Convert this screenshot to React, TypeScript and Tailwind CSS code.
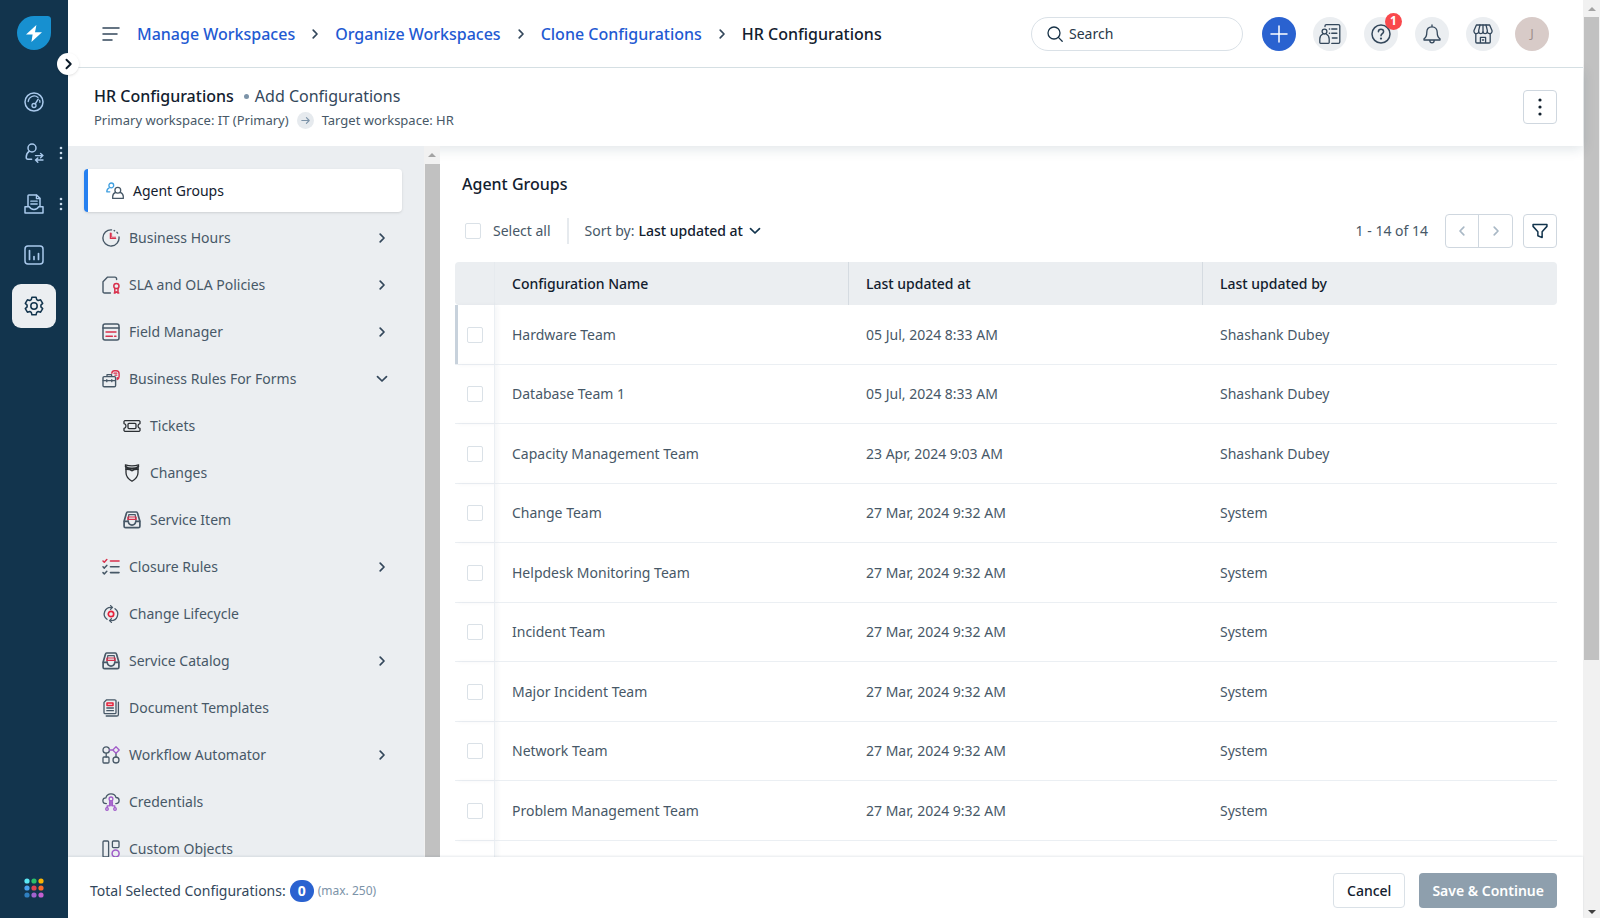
import type { ReactNode } from "react";
import clsx from "clsx";

type IconProps = { className?: string; viewBox?: string; children?: ReactNode };

function Svg({ className = "size-[18px]", viewBox = "0 0 18 18", children }: IconProps) {
  return (
    <svg
      className={clsx("shrink-0", className)}
      viewBox={viewBox}
      fill="none"
      stroke="currentColor"
      strokeWidth="1.3"
      strokeLinecap="round"
      strokeLinejoin="round"
      aria-hidden="true"
    >
      {children}
    </svg>
  );
}

const RED = "#d9304c";
const PURPLE = "#a15bc9";

function ChevronRight({ className = "h-[10px] w-[8px]" }: IconProps) {
  return (
    <Svg className={className} viewBox="0 0 8 10">
      <path d="M2.2 1.2 6 5 2.2 8.8" strokeWidth="1.7" />
    </Svg>
  );
}

function ChevronDown({ className = "h-[8px] w-[12px]" }: IconProps) {
  return (
    <Svg className={className} viewBox="0 0 12 8">
      <path d="M1.5 1.6 6 6l4.5-4.4" strokeWidth="1.7" />
    </Svg>
  );
}

function TrayIcon() {
  return (
    <Svg>
      <path d="M4.6 1h8.8q.9 0 1.100.9l2.400 8.300v5q0 1.500-1.500 1.500H2.600q-1.500 0-1.500-1.500v-5L3.500 1.900Q3.700 1 4.600 1z" strokeWidth="1.7" />
      <path d="M6.200 3.700h5.600M5.800 3.700 5 10M12.200 3.700 13 10" strokeWidth="1.2" />
      <path d="M4.900 6h8.200v2.400H4.900z" stroke={RED} strokeWidth="1.2" />
      <path d="M1.400 10.400h3.800q.6 3.700 3.800 3.700t3.800-3.700h3.800" strokeWidth="1.6" />
    </Svg>
  );
}

const icons: Record<string, ReactNode> = {
  groups: (
    <Svg>
      <g stroke="#3f9fe0">
        <circle cx="5.3" cy="3.4" r="2.4" />
        <path d="M3.2 5.8C1.4 6.6.8 8 .8 9.8h3" />
      </g>
      <circle cx="11.8" cy="8.3" r="2.9" />
      <path d="M9.6 10.4c-2 .8-2.900 2.300-2.900 4.200v1.800h10.600v-1.800c0-1.900-1-3.400-3-4.200" />
    </Svg>
  ),
  clock: (
    <Svg>
      <path d="M9.500.9A8.100 8.100 0 1 0 17 8M12.200 1.600l.4.2M15 3.300l.6.8" strokeWidth="1.4" />
      <path d="M8.400 4.200v5.200h5.200" stroke={RED} />
      <path d="M9.600 4.200v4h4" stroke={RED} strokeWidth=".8" />
    </Svg>
  ),
  sla: (
    <Svg>
      <path d="M8.400 17H2.600Q1 17 1 15.400V5.800L5.600 1.100h7.200q1.800 0 1.800 1.800v.6" strokeWidth="1.4" />
      <g stroke={RED} strokeWidth="1.5">
        <circle cx="14.400" cy="10" r="2.600" />
        <path d="M12.800 12.400v4.600l1.600-1.200L16 17v-4.600M12.200 17h1M15.800 17h1" />
      </g>
    </Svg>
  ),
  field: (
    <Svg>
      <rect x="1" y="1" width="16" height="16" rx="2" strokeWidth="1.5" />
      <path d="M1 5h16" strokeWidth="1.6" />
      <path d="M4 9h10M4 13.200h6.400M12.600 13.200h1.400" stroke={RED} strokeWidth="1.4" />
    </Svg>
  ),
  rules: (
    <Svg>
      <rect x="1" y="6.600" width="12.600" height="10.200" rx="1.200" strokeWidth="1.4" />
      <path d="M5 6.400V4.700h4.600v1.700M1.200 10.600h12.200M4.800 9.700v2M9.800 9.700v2" />
      <g stroke={RED}>
        <path d="M9.800 3.200c.2-1.600 1.200-2.400 2.600-2.400h1.800c1.700 0 2.900 1.200 2.900 2.900v2.800c0 1.400-.8 2.400-1.800 2.900V7.600" strokeWidth="1.4" />
        <path d="M12 3.200h2.800M13 5.200h1.800" />
      </g>
    </Svg>
  ),
  tickets: (
    <Svg>
      <path d="M1.800 3.600h14.400l.8.8v2.200q-2 .4-2 2.400t2 2.400v2.200l-.8.800H1.800l-.8-.8v-2.200q2-.4 2-2.400t-2-2.400V4.400z" strokeWidth="1.3" />
      <rect x="5" y="6.400" width="8" height="5.200" rx="1" />
    </Svg>
  ),
  changes: (
    <Svg>
      <path d="M2.400.8q6.600 2.200 13.200 0l-.6 3.400v4.600q0 5-6 8.400-6-3.400-6-8.400V4.200z" />
      <path d="M2.600 2.600q2.400 1.700 6.400 1.700t6.400-1.700M3 5.200q3.800-.2 6 1.500 2.200-1.700 6-1.500" strokeWidth="1.7" />
    </Svg>
  ),
  service: <TrayIcon />,
  closure: (
    <Svg>
      <g stroke={RED}>
        <path d="m1 3 1.300 1.300L4.800 1.600" strokeWidth="1.5" />
        <path d="M8.500 3H17" strokeWidth="1.6" />
      </g>
      <path d="m1 8.800 1.300 1.300 2.500-2.700M1 14.600l1.300 1.300 2.500-2.700" strokeWidth="1.5" />
      <path d="M8.500 8.800H17M8.500 14.600H17" strokeWidth="1.6" />
    </Svg>
  ),
  lifecycle: (
    <Svg>
      <circle cx="9" cy="9" r="2.700" stroke="#e5213a" strokeWidth="1.700" />
      <path d="M9.600 2.400A6.600 6.600 0 0 0 5 14.300M8.400 15.600A6.600 6.600 0 0 0 13 3.700" />
      <path d="m8.600.6 1.900 1.800-1.900 1.800M9.400 13.800l-1.900 1.800 1.900 1.800" />
    </Svg>
  ),
  catalog: <TrayIcon />,
  documents: (
    <Svg>
      <path d="M3.200 14.600h9.600q1.200 0 1.200-1.200V2q0-1.200-1.200-1.200H4.600L2 3.400v10q0 1.200 1.200 1.200z" />
      <path d="M16.400 3.200v12.200q0 1.600-1.600 1.600H4.200" />
      <rect x="5" y="4" width="6" height="2.400" stroke="#e5213a" strokeWidth="1.5" />
      <path d="M4.800 9h6.600M4.800 11.700h6.600" />
    </Svg>
  ),
  workflow: (
    <Svg>
      <circle cx="4.200" cy="4" r="3.200" />
      <rect x="1" y="11" width="6" height="6" rx="1" />
      <circle cx="14" cy="14" r="3" />
      <path d="M4.200 7.200V11M14 7.400V11" />
      <path d="M14 .8 17.200 4 14 7.200 10.800 4zM7.400 4h3.400" stroke={PURPLE} />
    </Svg>
  ),
  credentials: (
    <Svg>
      <path d="M4.400 10.600C2.200 10.600.9 9.400.9 7.700c0-1.800 1.400-2.800 3-2.800C4.400 2.500 6.500.8 9 .8c2.400 0 4.400 1.500 5 3.700 1.800 0 3.100 1.200 3.100 3 0 1.900-1.300 3.100-3.300 3.100" />
      <g stroke={PURPLE}>
        <circle cx="9" cy="5.900" r="1.900" />
        <path d="M9 7.800v5M7.600 8.600v4.200H5.200v1.800M10.400 8.600v4.200h2.400v1.800" />
        <circle cx="5" cy="16" r="1.300" />
        <circle cx="13" cy="16" r="1.300" />
      </g>
    </Svg>
  ),
  objects: (
    <Svg>
      <rect x="1" y="1" width="5.600" height="16" rx="1" />
      <rect x="10.400" y="1" width="6.600" height="6.600" rx="1" />
      <circle cx="13.600" cy="13.600" r="3.500" stroke={PURPLE} strokeWidth="1.5" />
    </Svg>
  ),
};

type NavItem = { label: string; icon: string; child?: boolean; active?: boolean; chevron?: "right" | "down" };

const navItems: NavItem[] = [
  { label: "Agent Groups", icon: "groups", active: true },
  { label: "Business Hours", icon: "clock", chevron: "right" },
  { label: "SLA and OLA Policies", icon: "sla", chevron: "right" },
  { label: "Field Manager", icon: "field", chevron: "right" },
  { label: "Business Rules For Forms", icon: "rules", chevron: "down" },
  { label: "Tickets", icon: "tickets", child: true },
  { label: "Changes", icon: "changes", child: true },
  { label: "Service Item", icon: "service", child: true },
  { label: "Closure Rules", icon: "closure", chevron: "right" },
  { label: "Change Lifecycle", icon: "lifecycle" },
  { label: "Service Catalog", icon: "catalog", chevron: "right" },
  { label: "Document Templates", icon: "documents" },
  { label: "Workflow Automator", icon: "workflow", chevron: "right" },
  { label: "Credentials", icon: "credentials" },
  { label: "Custom Objects", icon: "objects" },
];

const rows = [
  ["Hardware Team", "05 Jul, 2024 8:33 AM", "Shashank Dubey"],
  ["Database Team 1", "05 Jul, 2024 8:33 AM", "Shashank Dubey"],
  ["Capacity Management Team", "23 Apr, 2024 9:03 AM", "Shashank Dubey"],
  ["Change Team", "27 Mar, 2024 9:32 AM", "System"],
  ["Helpdesk Monitoring Team", "27 Mar, 2024 9:32 AM", "System"],
  ["Incident Team", "27 Mar, 2024 9:32 AM", "System"],
  ["Major Incident Team", "27 Mar, 2024 9:32 AM", "System"],
  ["Network Team", "27 Mar, 2024 9:32 AM", "System"],
  ["Problem Management Team", "27 Mar, 2024 9:32 AM", "System"],
];

const dots = ["#5be8f5", "#2bbf6a", "#fbb404", "#4aa3f0", "#e04352", "#fb6a2a", "#2f7fc0", "#a263cf", "#c45fd0"];

function RailDots() {
  return (
    <svg className="absolute top-[15px] left-[59px] h-3.5 w-1" viewBox="0 0 4 14" fill="#c5d8ea" aria-hidden="true">
      <circle cx="2" cy="2" r="1.3" />
      <circle cx="2" cy="7" r="1.3" />
      <circle cx="2" cy="12" r="1.3" />
    </svg>
  );
}

function Rail() {
  return (
    <aside className="relative z-30 flex w-[68px] shrink-0 flex-col items-center bg-[#12344d] pt-4 pb-5 text-[#a9c9ec]">
      <a href="#" aria-label="Home">
        <svg className="size-[34px]" viewBox="0 0 34 34" aria-hidden="true">
          <path d="M17 0h13.500Q34 0 34 3.500V17A17 17 0 1 1 17 0z" fill="#1790d0" />
          <path d="M19.400 9 9 18.400h6.600L14.400 26 25 16.200h-7z" fill="#fff" />
        </svg>
      </a>
      <button
        aria-label="Expand menu"
        className="absolute top-[53px] left-[57px] flex size-[22px] items-center justify-center rounded-full bg-white text-[#0b1a28] shadow"
      >
        <ChevronRight className="h-[12px] w-[9px]" />
      </button>

      <nav className="mt-[30px] flex w-full flex-col items-center gap-[7px]">
        <a href="#" aria-label="Dashboard" className="flex h-11 w-full items-center justify-center">
          <Svg className="size-5" viewBox="0 0 20 20">
            <circle cx="10" cy="10" r="9" strokeWidth="1.5" />
            <path d="M4.200 9.500A6 6 0 0 1 14 5.400M15.600 8.300q.4 1 .3 2" />
            <circle cx="10" cy="13.500" r="2" />
            <path d="m11.200 11.800 3-4.600" strokeWidth="1.5" />
          </Svg>
        </a>
        <a href="#" aria-label="Tickets" className="relative flex h-11 w-full items-center justify-center">
          <Svg className="size-5" viewBox="0 0 20 20">
            <circle cx="8" cy="5" r="4" strokeWidth="1.5" />
            <path d="M5.400 8.200Q2.200 10.400 2.200 14.200q0 2 1.800 2h3.600" strokeWidth="1.5" />
            <path d="M11.500 12.600H19M16.600 10.400l2.300 2.200-2.300 2.200M19 17h-7.500M13.800 14.900 11.500 17l2.300 2.200" strokeWidth="1.4" />
          </Svg>
          <RailDots />
        </a>
        <a href="#" aria-label="Assets" className="relative flex h-11 w-full items-center justify-center">
          <Svg className="size-5" viewBox="0 0 20 20">
            <path d="M4 12V1.800Q4 1 4.800 1h7.800L16 4.400V12" strokeWidth="1.5" />
            <path d="M12.400 1.200v3.400h3.400M6.800 7.200h6.400M6.800 10h6.400" />
            <path d="M1 19v-6.200h4.400q1 2.600 4.600 2.600t4.600-2.600H19V19z" strokeWidth="1.5" />
          </Svg>
          <RailDots />
        </a>
        <a href="#" aria-label="Reports" className="flex h-11 w-full items-center justify-center">
          <Svg className="size-5" viewBox="0 0 20 20">
            <rect x="1" y="1" width="18" height="18" rx="3" strokeWidth="1.5" />
            <path d="M5.500 5.500v9M10 11.500v3M14.500 8.500v6" strokeWidth="1.7" />
          </Svg>
        </a>
        <a
          href="#"
          aria-label="Admin"
          className="flex size-11 items-center justify-center rounded-[9px] bg-[#ebeef1] text-[#12344d]"
        >
          <Svg className="size-5" viewBox="0 0 20 20">
            <path
              d="M7.900 1.200h4.200l.6 2.400 1.500.9 2.400-.7 2.100 3.600-1.800 1.700v1.800l1.800 1.700-2.100 3.600-2.400-.7-1.500.9-.6 2.400H7.900l-.6-2.400-1.500-.9-2.400.7-2.100-3.600 1.800-1.700V9.100L1.300 7.400l2.100-3.600 2.400.7 1.500-.9z"
              strokeWidth="1.5"
            />
            <circle cx="10" cy="10" r="3.200" strokeWidth="1.5" />
          </Svg>
        </a>
      </nav>

      <button aria-label="Switch product" className="mt-auto">
        <svg className="size-5" viewBox="0 0 20 20" aria-hidden="true">
          {dots.map((color, i) => (
            <circle key={color} cx={3 + (i % 3) * 7} cy={3 + Math.floor(i / 3) * 7} r="2.6" fill={color} />
          ))}
        </svg>
      </button>
    </aside>
  );
}

function RoundButton({ label, children }: { label: string; children: ReactNode }) {
  return (
    <button
      aria-label={label}
      className="relative flex size-[34px] items-center justify-center rounded-full bg-[#ebeef1] text-[#33475b]"
    >
      {children}
    </button>
  );
}

function TopBar() {
  const crumbs = ["Manage Workspaces", "Organize Workspaces", "Clone Configurations"];

  return (
    <header className="relative z-20 flex h-[68px] shrink-0 items-center border-b border-[#d5dfe3] bg-white px-[34px]">
      <button aria-label="Toggle menu" className="text-[#33475b]">
        <Svg className="h-4 w-[18px]" viewBox="0 0 18 16">
          <path d="M1 2h16M1 8h14M1 14h9" strokeWidth="1.5" />
        </Svg>
      </button>

      <nav className="ml-[17px] flex items-center gap-4 text-base font-medium text-[#1f5ad2]">
        {crumbs.map((crumb) => (
          <span key={crumb} className="flex items-center gap-4">
            <a href="#">{crumb}</a>
            <ChevronRight className="h-[12px] w-[8px] text-[#33475b]" />
          </span>
        ))}
        <span className="text-[#12202e]">HR Configurations</span>
      </nav>

      <div className="ml-auto flex items-center gap-[17px]">
        <label className="mr-0.5 flex h-[34px] w-[212px] items-center gap-1.5 rounded-full border border-[#dae1e7] px-[15px] text-[#183247]">
          <Svg className="size-4" viewBox="0 0 16 16">
            <circle cx="7" cy="7" r="6" />
            <path d="m11.400 11.400 3.800 3.800" />
          </Svg>
          <input
            type="search"
            aria-label="Search"
            placeholder="Search"
            className="w-full bg-transparent text-sm outline-none placeholder:text-[#283848]"
          />
        </label>
        <button aria-label="Create" className="flex size-[34px] items-center justify-center rounded-full bg-[#2a62d0] text-white">
          <Svg>
            <path d="M9 1v16M1 9h16" strokeWidth="1.5" />
          </Svg>
        </button>
        <RoundButton label="Directory">
          <Svg className="size-[22px]" viewBox="0 0 22 22">
            <circle cx="5.500" cy="8.600" r="2.400" />
            <path d="M3.800 11C1.800 12 .8 13.800.8 16v3.600q0 .8.800.800h7.800q.8 0 .8-.8V16c0-2.200-1-4-3-5" />
            <path d="M6 3.600V3q0-1.400 1.400-1.400h12q1.400 0 1.400 1.400v16q0 1.400-1.400 1.400h-6.600" />
            <path d="M10.400 6h.2M12.800 6h5M10.400 10.300h.2M12.800 10.300h5M13.400 15h4.600" strokeWidth="1.5" />
          </Svg>
        </RoundButton>
        <RoundButton label="Help">
          <Svg className="size-5" viewBox="0 0 20 20">
            <circle cx="10" cy="10" r="9" strokeWidth="1.5" />
            <path d="M7.400 7.800c0-1.500 1.100-2.500 2.600-2.500s2.600 1 2.600 2.400c0 1.800-2.600 2.100-2.600 4.100" strokeWidth="1.5" />
            <circle cx="10" cy="14.600" r=".5" fill="currentColor" />
          </Svg>
          <span className="absolute -top-1 -right-1 flex size-[17px] items-center justify-center rounded-full bg-[#f9484c] text-xs leading-none font-bold text-white">
            1
          </span>
        </RoundButton>
        <RoundButton label="Notifications">
          <Svg className="size-5" viewBox="0 0 20 20">
            <path d="M10 2.800c-3.300 0-5.200 2.400-5.200 5.400 0 4-1.200 5.600-2.800 6.600v1.200h16v-1.200c-1.600-1-2.800-2.600-2.800-6.600 0-3-1.900-5.400-5.200-5.400zM10 1v1.600M7.800 16.200c0 1.600.8 2.600 2.200 2.600s2.200-1 2.200-2.600" />
          </Svg>
        </RoundButton>
        <RoundButton label="Marketplace">
          <Svg className="size-5" viewBox="0 0 20 20">
            <path d="M3.400 1h13.200L19 6.600v1.200q-.4 1.800-2.300 1.800t-2.400-1.800q-.4 1.800-2.200 1.800T10 7.800q-.4 1.800-2.200 1.800T5.700 7.800q-.5 1.800-2.400 1.800T1 7.800V6.600z" />
            <path d="M7 1 5.700 6.400v1.400M10 1v6.800M13 1l1.300 5.400v1.400M2.800 9.800V18q0 1 1 1h12.400q1 0 1-1V9.800M7.400 19v-5.600h5.200V19" />
            <path d="M9.400 16h1.200" />
          </Svg>
        </RoundButton>
        <button className="-ml-0.5 flex size-[34px] items-center justify-center rounded-full bg-[#d8cbc8] text-[13px] text-[#9f8f8c]">
          J
        </button>
      </div>
    </header>
  );
}

function PageHeader() {
  return (
    <div className="relative z-10 flex h-[78px] shrink-0 items-center justify-between bg-white px-[26px] shadow-[0_3px_12px_rgba(18,52,77,0.13)]">
      <div>
        <h1 className="flex items-center text-base leading-6 text-[#33475b]">
          <span className="font-medium text-[#12202e]">HR Configurations</span>
          <span className="mr-1.5 ml-2.5 size-[5px] rounded-full bg-[#7c93a8]" />
          Add Configurations
        </h1>
        <p className="mt-0.5 flex items-center gap-2 text-[13px] leading-5 text-[#475867]">
          Primary workspace: IT (Primary)
          <span className="flex size-[17px] items-center justify-center rounded-full bg-[#e6eaee] text-[#7c93a8]">
            <Svg className="size-[9px]" viewBox="0 0 9 9">
              <path d="M.8 4.500h7.400M5.400 1.700l2.800 2.800-2.800 2.800" strokeWidth="1.1" />
            </Svg>
          </span>
          Target workspace: HR
        </p>
      </div>
      <button aria-label="More actions" className="flex size-[34px] items-center justify-center rounded border border-[#cfd7df] text-[#12202e]">
        <svg className="h-[18px] w-1" viewBox="0 0 4 18" fill="currentColor" aria-hidden="true">
          <circle cx="2" cy="2" r="1.6" />
          <circle cx="2" cy="9" r="1.6" />
          <circle cx="2" cy="16" r="1.6" />
        </svg>
      </button>
    </div>
  );
}

function SideNavItem({ item }: { item: NavItem }) {
  const className = clsx(
    "flex h-[43px] w-full items-center gap-[9px] rounded pr-3.5 text-left text-sm",
    item.child ? "pl-[39px]" : "pl-[18px]",
    item.active ? "border-l-4 border-[#2680f0] bg-white text-[#12202e] shadow-sm" : "text-[#475867]",
  );
  const content = (
    <>
      <span className={item.icon === "changes" || item.icon === "tickets" ? "text-[#2b2f33]" : "text-[#475867]"}>
        {icons[item.icon]}
      </span>
      <span className="grow">{item.label}</span>
      {item.chevron === "right" && <ChevronRight className="mx-0.5 h-[10px] w-[8px] text-[#33475b]" />}
      {item.chevron === "down" && <ChevronDown className="h-[8px] w-[12px] text-[#33475b]" />}
    </>
  );

  return (
    <li>
      {item.chevron ? (
        <button className={className} aria-expanded={item.chevron === "down"}>
          {content}
        </button>
      ) : (
        <a href="#" className={className}>
          {content}
        </a>
      )}
    </li>
  );
}

function Checkbox({ id, label }: { id: string; label?: string }) {
  return (
    <input
      id={id}
      type="checkbox"
      aria-label={label}
      className="block size-4 appearance-none rounded-[2px] border border-[#dae1e7] bg-white checked:bg-[#2a62d0]"
    />
  );
}

function Toolbar() {
  return (
    <div className="mt-[17px] flex h-9 items-center pl-2.5 text-sm text-[#475867]">
      <Checkbox id="select-all" />
      <label htmlFor="select-all" className="ml-3">
        Select all
      </label>
      <span className="mx-4 h-[26px] w-0.5 bg-[#e6eaee]" />
      <label htmlFor="sort-by">Sort by:</label>
      <select id="sort-by" className="ml-1 appearance-none bg-transparent font-medium text-[#12202e]">
        <option>Last updated at</option>
      </select>
      <ChevronDown className="ml-1.5 h-[8px] w-[12px] text-[#12344d]" />

      <span className="ml-auto">1 - 14 of 14</span>
      <div className="ml-[17px] flex h-[34px] divide-x divide-[#cfd7df] rounded border border-[#cfd7df] text-[#a9b8c5]">
        <button aria-label="Previous page" className="flex w-[33px] items-center justify-center" disabled>
          <ChevronRight className="h-[12px] w-[8px] rotate-180" />
        </button>
        <button aria-label="Next page" className="flex w-[33px] items-center justify-center" disabled>
          <ChevronRight className="h-[12px] w-[8px]" />
        </button>
      </div>
      <button aria-label="Filter" className="ml-2.5 flex size-[34px] items-center justify-center rounded border border-[#cfd7df] text-[#12344d]">
        <Svg className="size-4">
          <path d="M1.200 1.600h15.600v2.200l-5.400 6v6.600l-4.800-2V9.800l-5.400-6z" strokeWidth="1.7" />
        </Svg>
      </button>
    </div>
  );
}

function ConfigTable() {
  return (
    <table className="mt-[13px] w-full table-fixed border-separate border-spacing-0 text-left text-sm text-[#475867]">
      <thead>
        <tr className="h-[43px] bg-[#ebeef1] text-[#12202e]">
          <th className="w-10 rounded-l border-r border-[#e6eaee]" />
          <th className="border-r border-[#d5dbe1] px-[17px] font-medium">Configuration Name</th>
          <th className="border-r border-[#d5dbe1] px-[17px] font-medium">Last updated at</th>
          <th className="rounded-r px-[17px] font-medium">Last updated by</th>
        </tr>
      </thead>
      <tbody>
        {rows.map(([name, date, by], i) => (
          <tr key={name} className="odd:h-[60px] even:h-[59px]">
            <td
              className={clsx(
                "border-r border-b border-[#ebeff3] pl-3 shadow-[3px_0_4px_rgba(18,52,77,0.04)]",
                i === 0 && "bg-[linear-gradient(to_right,#c8d2dc_3px,transparent_3px)]",
              )}
            >
              <Checkbox id={`row-${i}`} label={name} />
            </td>
            <td className="border-b border-[#ebeff3] px-[17px]">{name}</td>
            <td className="border-b border-[#ebeff3] px-[17px]">{date}</td>
            <td className="border-b border-[#ebeff3] px-[17px]">{by}</td>
          </tr>
        ))}
        <tr className="h-[60px]">
          <td className="border-r border-[#ebeff3] shadow-[3px_0_4px_rgba(18,52,77,0.04)]" />
          <td colSpan={3} />
        </tr>
      </tbody>
    </table>
  );
}

function Footer() {
  return (
    <footer className="relative z-20 flex h-[61px] shrink-0 items-center bg-white pt-1.5 pr-[26px] pl-[22px] text-sm text-[#33475b] shadow-[0_-1px_2px_rgba(18,52,77,0.1)]">
      Total Selected Configurations:
      <span className="ml-1 flex h-[22px] w-6 items-center justify-center rounded-full bg-[#2a62d0] font-bold text-white">0</span>
      <span className="ml-1 text-xs text-[#7c93a8]">(max. 250)</span>
      <button className="ml-auto h-[35px] rounded border border-[#dae1e7] px-[13px] font-medium text-[#12202e]">Cancel</button>
      <button className="ml-3.5 h-[35px] rounded bg-[#8e9fad] px-[13px] font-semibold text-white">Save &amp; Continue</button>
    </footer>
  );
}

export default function App() {
  return (
    <div className="flex h-screen overflow-hidden bg-white font-['Noto_Sans',sans-serif]">
      <Rail />

      <div className="flex min-w-0 grow flex-col">
        <TopBar />
        <PageHeader />
        <div className="flex min-h-0 grow">
          <aside className="relative z-10 flex w-[372px] shrink-0 overflow-hidden bg-[#ebeef1]">
            <ul className="flex grow flex-col gap-1 pt-[23px] pr-[22px] pl-4">
              {navItems.map((item) => (
                <SideNavItem key={item.label} item={item} />
              ))}
            </ul>
            <div className="flex w-4 flex-col items-center bg-[#f1f1f1]">
              <svg className="my-[7px] h-1 w-2" viewBox="0 0 8 4" fill="#a3a3a3" aria-hidden="true">
                <path d="M0 4 4 0l4 4z" />
              </svg>
              <div className="w-[15px] grow bg-[#c1c1c1]" />
            </div>
          </aside>

          <main className="min-w-0 grow overflow-hidden pt-[26px] pr-[26px] pl-[15px]">
            <h2 className="pl-[7px] text-base font-medium text-[#12202e]">Agent Groups</h2>
            <Toolbar />
            <ConfigTable />
          </main>
        </div>
        <Footer />
      </div>

      {/* window scrollbar */}
      <div className="flex w-[17px] shrink-0 flex-col items-center bg-[#f1f1f1]">
        <svg className="mt-[7px] mb-1.5 h-1 w-2" viewBox="0 0 8 4" fill="#a3a3a3" aria-hidden="true">
          <path d="M0 4 4 0l4 4z" />
        </svg>
        <div className="h-[70%] w-[15px] bg-[#c1c1c1]" />
        <svg className="mt-auto mb-1 h-1 w-2" viewBox="0 0 8 4" fill="#404040" aria-hidden="true">
          <path d="M0 0l4 4 4-4z" />
        </svg>
      </div>
    </div>
  );
}
